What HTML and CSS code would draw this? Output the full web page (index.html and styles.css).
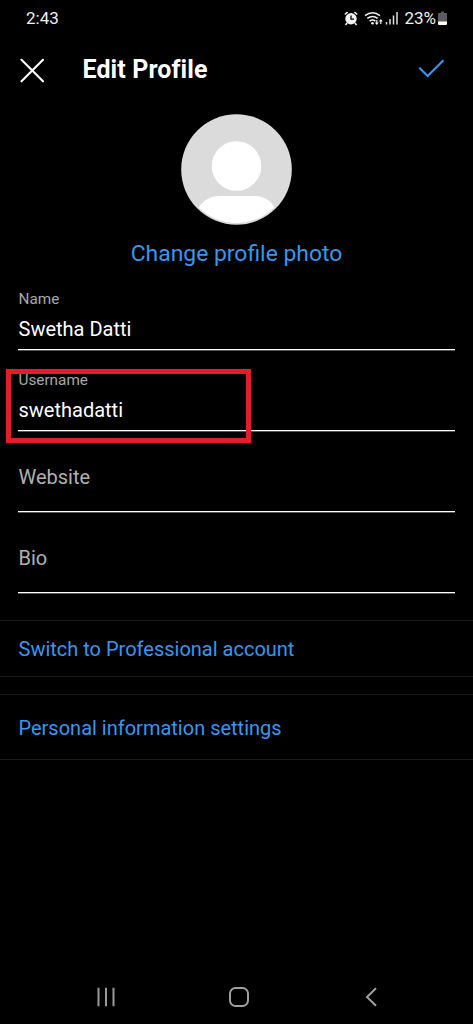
FILE: index.html
```html
<!DOCTYPE html>
<html lang="en">
<head>
<meta charset="utf-8">
<title>Edit Profile</title>
<link rel="stylesheet" href="styles.css">
</head>
<body>
<div class="screen">
  <div class="status">
    <span class="time">2:43</span>
    <div class="indicators">
      <svg class="alarm" width="14" height="15" viewBox="0 0 14 15">
        <path d="M.8 3.500 3.600 1M13.200 3.500 10.400 1M3 12l-1.500 2M11 12l1.500 2" stroke="#f2f2f2" stroke-width="1.600" fill="none"/>
        <circle cx="7" cy="7.800" r="5.700" fill="#f2f2f2"/>
        <path d="M7 4.400v3.800h3" stroke="#000" stroke-width="1.300" fill="none"/>
      </svg>
      <svg class="wifi" width="20" height="15" viewBox="0 0 20 15">
        <path d="M1 4.600Q8.500-1 16 4.600M3.300 7.400Q8.500 3.400 13.700 7.400M5.600 10.100Q8.500 7.900 11.400 10.100" stroke="#f2f2f2" stroke-width="1.500" fill="none"/>
        <circle cx="8.500" cy="12.300" r="1.300" fill="#f2f2f2"/>
        <path d="M12.800 9v4M16.800 13V9" stroke="#f2f2f2" stroke-width="1.200"/>
        <path d="M10.800 11.500h4l-2 2.500zM14.800 10.500h4l-2-2.500z" fill="#f2f2f2"/>
      </svg>
      <svg class="signal" width="13" height="14" viewBox="0 0 13 14">
        <path d="M1.500 11v2.500M5 8v5.500M8.500 4.500v9M12 1v12.500" stroke="#ddd" stroke-width="1.500"/>
      </svg>
      <span class="percent">23%</span>
      <svg class="battery" width="9" height="15" viewBox="0 0 9 15">
        <path d="M3 .5h3v1.500h2.500q.5 0 .5.500V11H0V2.500Q0 2 .5 2H3z" fill="#5c5c5c"/>
        <path d="M0 10.500h9V13q0 1-1 1H1q-1 0-1-1z" fill="#fff"/>
      </svg>
    </div>
  </div>
  <header class="header">
    <svg width="24" height="25" viewBox="0 0 24 25"><path d="M1.500 1.800 23 23.300M23 1.800 1.500 23.300" stroke="#fff" stroke-width="2.100" stroke-linecap="round"/></svg>
    <h1 class="title">Edit Profile</h1>
    <svg class="confirm" width="28" height="20" viewBox="0 0 28 20"><path d="M2.300 8.700 10.600 17 26.500 1.300" fill="none" stroke="#3897f0" stroke-width="2.100"/></svg>
  </header>
  <section class="photo">
    <svg width="111" height="111" viewBox="0 0 111 111">
      <defs><clipPath id="disc"><circle cx="55.500" cy="55.500" r="53.500"/></clipPath></defs>
      <circle cx="55.500" cy="55.500" r="55.300" fill="#dbdbdb"/>
      <circle cx="55.500" cy="52" r="24.800" fill="#fff"/>
      <path clip-path="url(#disc)" d="M15 111V99Q22 82 39 82H73Q90 82 96 99V111z" fill="#fff"/>
    </svg>
    <a class="change">Change profile photo</a>
  </section>
  <main class="form">
    <div class="field"><span class="label">Name</span><span class="value">Swetha Datti</span></div>
    <div class="field highlighted"><span class="label">Username</span><span class="value">swethadatti</span></div>
    <div class="field"><span class="placeholder">Website</span></div>
    <div class="field"><span class="placeholder">Bio</span></div>
  </main>
  <a class="action switch"><span>Switch to Professional account</span></a>
  <a class="action personal"><span>Personal information settings</span></a>
  <nav class="nav">
    <svg width="20" height="20" viewBox="0 0 20 20"><path d="M2.500 .7v18.600M10 .7v18.600M17.500 .7v18.600" stroke="#999" stroke-width="2"/></svg>
    <svg class="home" width="22" height="22" viewBox="0 0 22 22"><rect x="2" y="2" width="18" height="18" rx="5.500" fill="none" stroke="#a0a0a0" stroke-width="2"/></svg>
    <svg width="14" height="20" viewBox="0 0 14 20"><path d="M12 1.200 3 10l9 8.800" fill="none" stroke="#a0a0a0" stroke-width="2"/></svg>
  </nav>
</div>
</body>
</html>
```
FILE: styles.css
```css
*, *::after { box-sizing: border-box; }
body { margin: 0; background: #000; font-family: Roboto, "Liberation Sans", sans-serif; color: #fff; }
svg { display: block; flex: none; }
.screen { width: 473px; height: 1024px; display: flex; flex-direction: column; background: #000; overflow: hidden; }
.status { height: 38px; display: flex; align-items: center; justify-content: space-between; padding: 0 26px 2px 26px; font-size: 17px; line-height: 20px; color: #eee; }
.indicators { display: flex; align-items: center; }
.wifi { margin-left: 6px; }
.signal { margin-left: 1px; }
.percent { margin-left: 6px; }
.battery { margin-left: 2px; }
.header { height: 64px; display: flex; align-items: center; padding: 0 28px 0 20px; }
.title { margin: 0 0 0 38.500px; font-size: 25px; line-height: 30px; font-weight: 700; letter-spacing: 0.1px; }
.confirm { margin: -3px 0 0 auto; }
.photo { height: 167px; padding-top: 12px; display: flex; flex-direction: column; align-items: center; }
.change { margin-top: 13px; font-size: 22.900px; line-height: 31px; color: #3897f0; }
.form { padding: 0 18px; height: 351px; }
.field { position: relative; height: 81px; border-bottom: 1px solid #fff; box-shadow: 0 0.500px 0 #aaa; display: flex; flex-direction: column; padding: 20px 0 0 0.500px; }
.label { font-size: 15.300px; line-height: 20px; color: #a8a8a8; }
.value { margin-top: 8px; font-size: 20px; line-height: 24px; }
.placeholder { margin-top: 14px; font-size: 20px; line-height: 24px; color: #b0b0b0; }
.highlighted::after { content: ""; position: absolute; left: -12px; top: 19px; width: 245px; height: 74px; border: 5px solid #e51d26; z-index: 1; }
.action { display: flex; align-items: center; padding-left: 18.500px; font-size: 20px; line-height: 24px; color: #3897f0; border-top: 1px solid #191919; border-bottom: 1px solid #191919; }
.switch { height: 57px; }
.personal { height: 66px; margin-top: 17px; padding-top: 2px; }
.nav { height: 54px; margin-top: auto; display: flex; justify-content: space-between; align-items: center; padding: 0 95px 0 96px; }
.home { margin-right: 2px; }
```
